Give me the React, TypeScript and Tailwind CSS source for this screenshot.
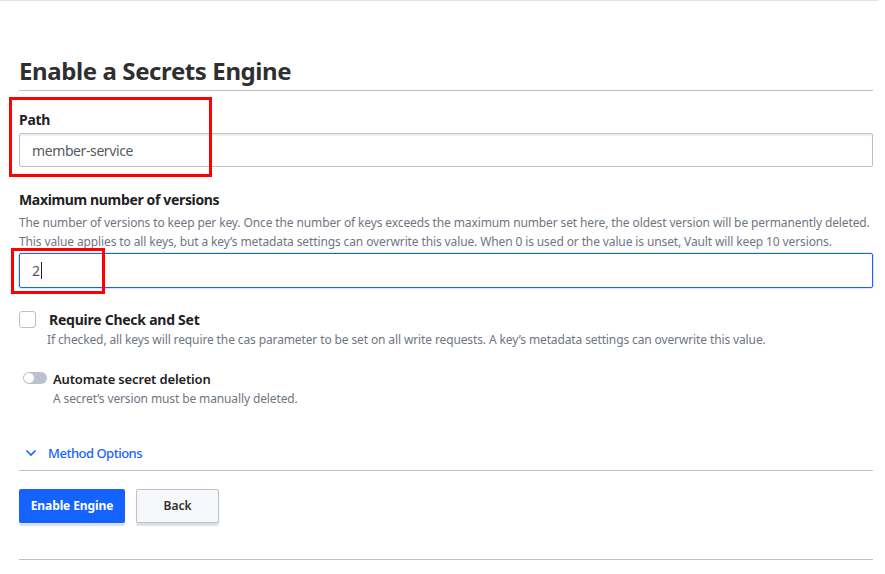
import { useState } from 'react';

const font = { fontFamily: '"Noto Sans", "Open Sans", sans-serif' };

function Help({ children, className = '' }: { children: React.ReactNode; className?: string }) {
  return <p className={`text-[12px] leading-[19px] tracking-[-0.12px] text-[#6f7682] ${className}`}>{children}</p>;
}

export default function App() {
  const [cas, setCas] = useState(false);
  const [auto, setAuto] = useState(false);

  return (
    <div style={font} className="relative w-[885px] h-[574px] bg-white overflow-hidden text-[#1f2124]">
      <div className="h-px w-[878px] bg-[#e2e2e2]" />
      <div className="pl-[19px] w-[873px]">
        <h1 className="mt-[54px] pb-[3px] text-[24px] leading-[32px] font-bold tracking-[-0.4px] text-[#2f2f2f] border-b border-[#bac1cc]">
          Enable a Secrets Engine
        </h1>

        <label className="block mt-[19px] text-[14px] leading-[20px] font-bold tracking-[-0.3px]">Path</label>
        <div className="mt-[3px] h-[34px] border border-[#bac1cc] rounded-[2px] shadow-[inset_0_4px_1px_-2px_#eceef1] flex items-center px-[12px] text-[14px] tracking-[-0.4px] text-[#555a61]">
          member-service
        </div>

        <label className="block mt-[23px] text-[14px] leading-[20px] font-bold tracking-[-0.35px]">
          Maximum number of versions
        </label>
        <Help className="mt-[3px]">
          The number of versions to keep per key. Once the number of keys exceeds the maximum number set here, the oldest
          version will be permanently deleted. This value applies to all keys, but a key’s metadata settings can overwrite
          this value. When 0 is used or the value is unset, Vault will keep 10 versions.
        </Help>
        <div className="mt-[2px] h-[35px] border border-[#1563ff] rounded-[2px] shadow-[0_0_0_1px_#dbe6ff] flex items-center px-[12px] text-[14px] text-[#555a61]">
          2<span className="ml-px w-px h-[17px] bg-[#222]" />
        </div>

        <div className="mt-[22px] flex items-start">
          <button
            onClick={() => setCas(!cas)}
            className="mt-[1px] w-[17px] h-[17px] shrink-0 rounded-[3px] border border-[#bac1cc] bg-white"
          />
          <div className="ml-[13px]">
            <div className="text-[14px] leading-[20px] font-bold tracking-[-0.25px]">Require Check and Set</div>
            <Help className="-ml-[2px]">
              If checked, all keys will require the cas parameter to be set on all write requests. A key’s metadata
              settings can overwrite this value.
            </Help>
          </div>
        </div>

        <div className="mt-[20px] flex items-start">
          <button
            onClick={() => setAuto(!auto)}
            className="ml-[4px] mt-[3px] w-[24px] h-[12px] rounded-full bg-[#bac1cc] flex items-center px-[1px]"
          >
            <span className="w-[10px] h-[10px] rounded-full bg-white" />
          </button>
          <div className="ml-[6px]">
            <div className="text-[13px] leading-[20px] font-semibold tracking-[-0.15px]">Automate secret deletion</div>
            <Help>A secret’s version must be manually deleted.</Help>
          </div>
        </div>

        <div className="mt-[35px] pb-[7px] border-b border-[#bac1cc] flex items-center text-[#1563ff]">
          <svg width="12" height="8" viewBox="0 0 12 8" className="ml-[6px]" fill="none">
            <path d="M1.5 1.5 L6 6 L10.5 1.5" stroke="#1563ff" strokeWidth="1.6" />
          </svg>
          <span className="ml-[11px] text-[13px] leading-[20px] font-medium tracking-[-0.5px]">Method Options</span>
        </div>

        <div className="mt-[18px] flex gap-[11px]">
          <button className="h-[34px] w-[106px] rounded-[2px] bg-[#1563ff] text-white text-[12px] font-bold tracking-[-0.1px] shadow-[0_3px_1px_#dde0e5]">
            Enable Engine
          </button>
          <button className="h-[34px] w-[83px] rounded-[2px] bg-[#f7f8fa] border border-[#bac1cc] text-[#2f2f2f] text-[12px] font-semibold shadow-[0_3px_1px_#dde0e5]">
            Back
          </button>
        </div>

        <div className="mt-[36px] h-px bg-[#bac1cc]" />
      </div>

      <div className="absolute left-[9px] top-[97px] w-[203px] h-[80px] border-[3px] border-[#ff0000]" />
      <div className="absolute left-[11px] top-[248px] w-[94px] h-[46px] border-[3px] border-[#ff0000]" />
    </div>
  );
}
